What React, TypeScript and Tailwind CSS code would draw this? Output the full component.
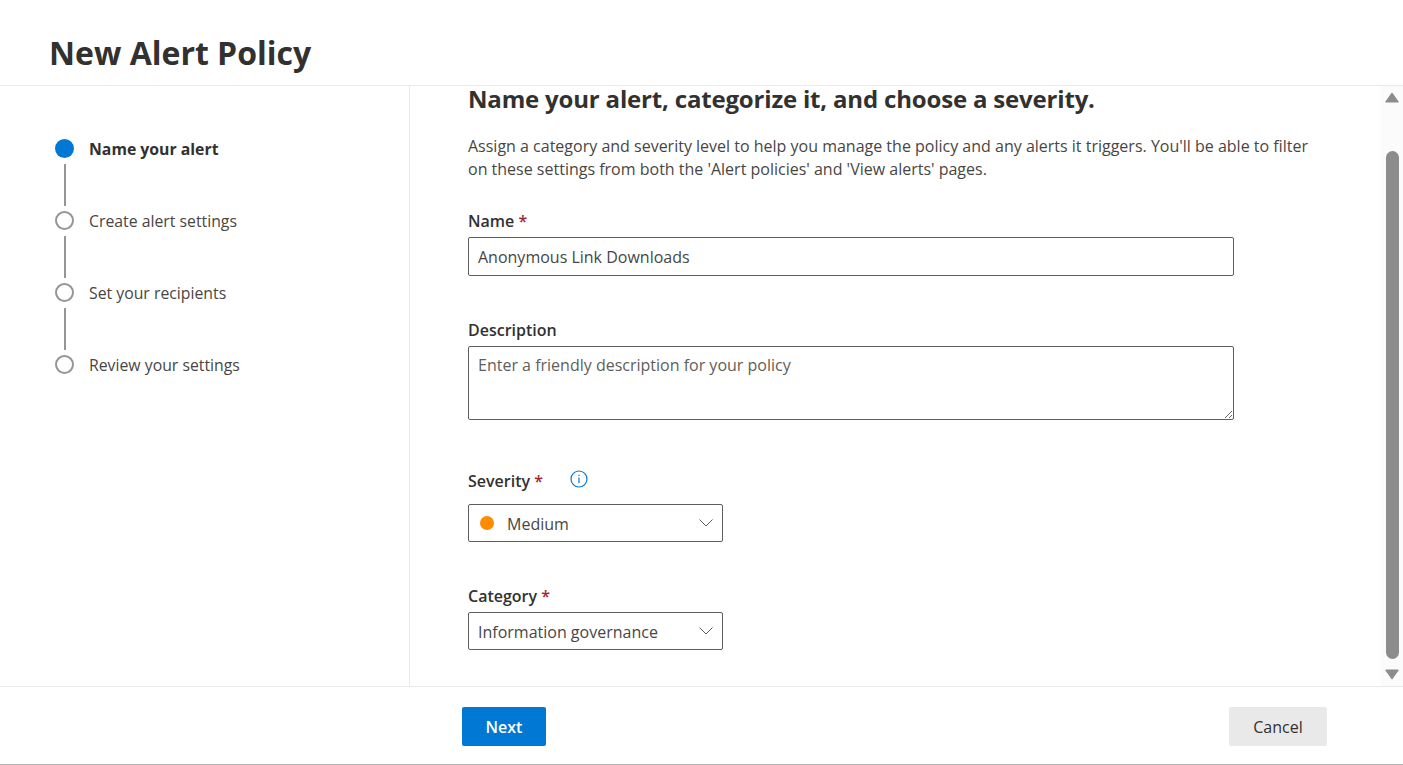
export default function App() {
  const steps = [
    { label: "Name your alert", active: true },
    { label: "Create alert settings" },
    { label: "Set your recipients" },
    { label: "Review your settings" },
  ];
  return (
    <div className="flex h-[765px] w-[1403px] flex-col overflow-hidden bg-white font-['Open_Sans',sans-serif] text-[#323130]">
      <header className="h-[86px] shrink-0 border-b border-[#e9e9e9] pl-[49px] pt-[29px]">
        <h1 className="text-[32px] leading-[48px] font-bold">New Alert Policy</h1>
      </header>

      <div className="flex h-[600px] shrink-0">
        <nav className="w-[410px] shrink-0 border-r border-[#e9e9e9] pl-[55px] pt-[53px]">
          {steps.map((s, i) => (
            <div key={s.label} className="flex flex-col">
              <div className="flex h-[20px] items-center">
                {s.active ? (
                  <span className="h-[19px] w-[19px] self-start rounded-full bg-[#0078d4]" />
                ) : (
                  <span className="h-[19px] w-[19px] self-start rounded-full border-[2.5px] border-[#979593] bg-white" />
                )}
                <span className={`ml-[15px] text-[15.8px] leading-[20px] ${s.active ? "font-bold" : "text-[#484644]"}`}>{s.label}</span>
              </div>
              {i < 3 && <div className="my-[5px] ml-[9px] h-[42px] w-[2px] bg-[#979593]" />}
            </div>
          ))}
        </nav>

        <main className="min-w-0 flex-1 pl-[58px]">
          <h2 className="h-[26px] text-[24px] leading-[26px] font-bold tracking-[-0.18px]">Name your alert, categorize it, and choose a severity.</h2>
          <p className="mt-[23px] w-[860px] text-[16px] leading-[23px] text-[#484644]">
            Assign a category and severity level to help you manage the policy and any alerts it triggers. You'll be able to filter on these settings from both the 'Alert policies' and 'View alerts' pages.
          </p>

          <label className="mt-[29px] block text-[16px] leading-[22px] font-[550]">
            Name <span className="text-[#a4262c]">*</span>
          </label>
          <input
            readOnly
            value="Anonymous Link Downloads"
            className="mt-[5px] block h-[39px] w-[766px] rounded-[2px] border border-[#605e5c] px-[9px] text-[16px] text-[#484644] outline-none"
          />

          <label className="mt-[43px] block text-[16px] leading-[22px] font-[550]">Description</label>
          <textarea
            readOnly
            placeholder="Enter a friendly description for your policy"
            className="mt-[5px] block h-[74px] w-[766px] resize-y rounded-[2px] border border-[#605e5c] px-[9px] py-[6px] text-[16px] leading-[24px] text-[#484644] outline-none placeholder:text-[#605e5c]"
          />

          <div className="mt-[48px] flex h-[26px] items-center">
            <label className="text-[16px] leading-[22px] font-[550]">
              Severity <span className="text-[#a4262c]">*</span>
            </label>
            <svg className="mb-[5px] ml-[27px]" width="18" height="18" viewBox="0 0 18 18" fill="none">
              <circle cx="9" cy="9" r="8" stroke="#0078d4" strokeWidth="1.2" />
              <rect x="8.4" y="7.6" width="1.2" height="5.6" fill="#0078d4" />
              <rect x="8.4" y="4.8" width="1.2" height="1.4" fill="#0078d4" />
            </svg>
          </div>
          <div className="mt-[10px] flex h-[38px] w-[255px] items-center rounded-[2px] border border-[#605e5c] pl-[11px] pr-[8px]">
            <span className="h-[14px] w-[14px] rounded-full bg-[#ff8c00]" />
            <span className="ml-[13px] flex-1 pt-[2px] text-[16px] text-[#484644]">Medium</span>
            <Chevron />
          </div>

          <label className="mt-[43px] block text-[16px] leading-[22px] font-[550]">
            Category <span className="text-[#a4262c]">*</span>
          </label>
          <div className="mt-[5px] flex h-[38px] w-[255px] items-center rounded-[2px] border border-[#605e5c] pl-[9px] pr-[8px]">
            <span className="flex-1 pt-[2px] text-[16px] text-[#484644]">Information governance</span>
            <Chevron />
          </div>
        </main>

        <div className="flex w-[22px] shrink-0 flex-col items-center bg-[#fbfbfb] pt-[6px]">
          <svg width="14" height="11" viewBox="0 0 14 11"><path d="M7 1.5 L13 9.8 H1 Z" fill="#8c8c8c" stroke="#8c8c8c" strokeWidth="1.4" strokeLinejoin="round" /></svg>
          <div className="mt-[48px] h-[508px] w-[13px] rounded-[7px] bg-[#8c8c8c]" />
          <svg className="mt-[10px]" width="14" height="11" viewBox="0 0 14 11"><path d="M1 1.2 H13 L7 9.5 Z" fill="#8c8c8c" stroke="#8c8c8c" strokeWidth="1.4" strokeLinejoin="round" /></svg>
        </div>
      </div>

      <footer className="flex h-[79px] shrink-0 items-start border-t border-b border-t-[#e9e9e9] border-b-[#b4b4b4] pt-[20px]">
        <button className="ml-[462px] h-[39px] w-[84px] rounded-[2px] bg-[#0078d4] pt-[1px] text-[16px] font-semibold text-white">Next</button>
        <button className="ml-[683px] h-[39px] w-[98px] rounded-[2px] bg-[#e9e9e9] pt-[1px] text-[16px] font-medium">Cancel</button>
      </footer>
    </div>
  );
}

function Chevron() {
  return (
    <svg width="16" height="10" viewBox="0 0 16 10" fill="none">
      <path d="M1.5 1.5 L8 8 L14.5 1.5" stroke="#605e5c" strokeWidth="1" />
    </svg>
  );
}
